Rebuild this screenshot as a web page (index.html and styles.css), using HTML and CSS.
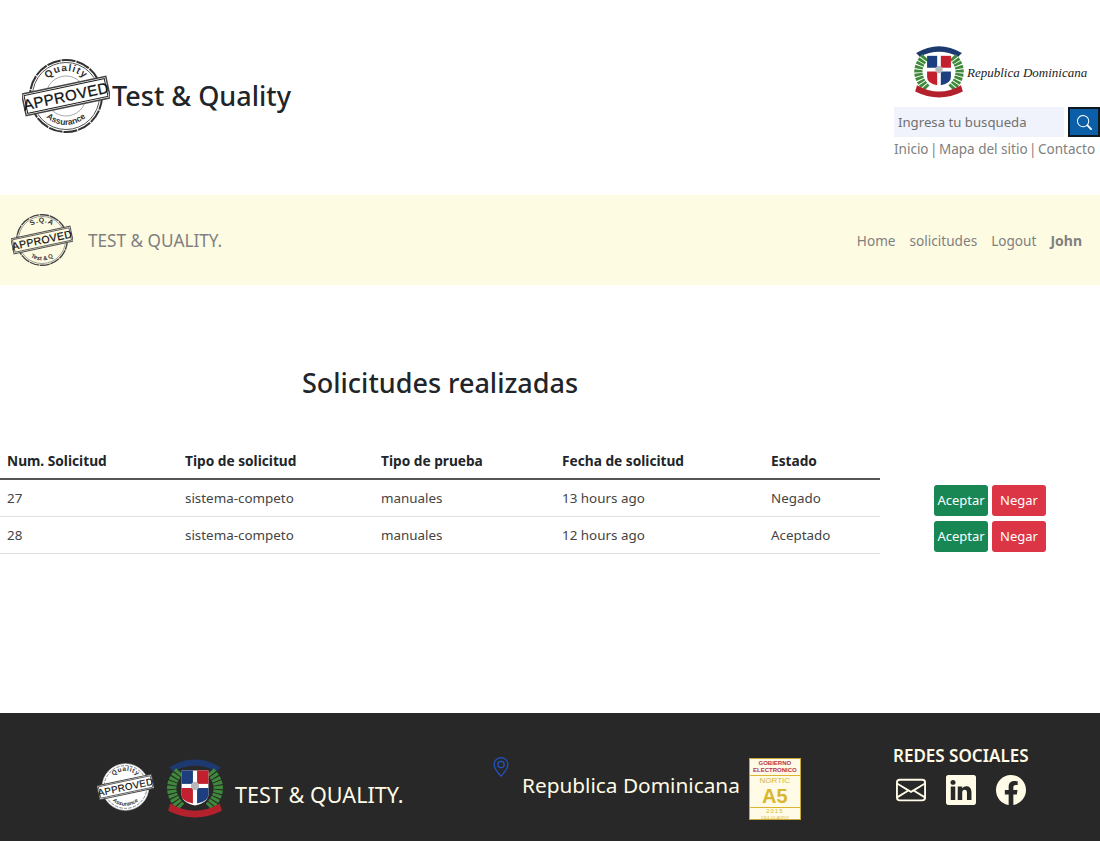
FILE: index.html
```html
<!DOCTYPE html>
<html lang="es">

<head>
    <meta charset="UTF-8">
    <meta name="viewport" content="width=device-width, initial-scale=1.0">
    <title>Test &amp; Quality</title>
    <link rel="stylesheet" href="styles.css">
</head>

<body>
    <!-- shared drawings -->
    <svg class="defs" width="0" height="0">
        <defs>
            <path id="arcTop" d="M19 37 A25 25 0 0 1 69 37" />
            <path id="arcBottom" d="M15 37 A29 29 0 0 0 73 37" />
            <symbol id="arms" viewBox="0 0 60 60">
                <path d="M5 11 Q30 -4 55 11 L51 15 Q30 4 9 15 Z" fill="#1d3a70" />
                <path class="laurel" d="M15 15 Q-1 32 17 50" />
                <path class="laurel" d="M45 15 Q61 32 43 50" />
                <path d="M17 14 H43 V37 Q43 45 30 48 Q17 45 17 37 Z" fill="#fff" />
                <rect x="17" y="14" width="11" height="13" fill="#1d3f80" />
                <rect x="32" y="14" width="11" height="13" fill="#c3202f" />
                <path d="M17 31 H28 V46 Q17 44 17 37 Z" fill="#c3202f" />
                <path d="M32 31 H43 V37 Q43 44 32 46 Z" fill="#1d3f80" />
                <circle cx="30" cy="29" r="4" fill="#b9b9b9" />
                <path d="M6 46 Q30 60 54 46 L56 53 Q30 66 4 53 Z" fill="#b3222c" />
            </symbol>
            <symbol id="search" viewBox="0 0 16 16">
                <path d="M11.742 10.344a6.5 6.5 0 1 0-1.397 1.398h-.001c.03.04.062.078.098.115l3.85 3.85a1 1 0 0 0 1.415-1.414l-3.85-3.85a1.007 1.007 0 0 0-.115-.1zM12 6.5a5.5 5.5 0 1 1-11 0 5.5 5.5 0 0 1 11 0z" />
            </symbol>
        </defs>
    </svg>

    <header class="top">
        <div class="top-brand">
            <svg class="stamp" viewBox="0 0 88 74">
                <circle cx="44" cy="37" r="36" fill="none" stroke="#333" stroke-width="2" stroke-dasharray="14 1" />
                <circle cx="44" cy="37" r="33.5" fill="none" stroke="#555" stroke-width="1" />
                <circle cx="44" cy="37" r="20" fill="none" stroke="#aaa" stroke-width="1" />
                <text class="stamp-arc"><textPath href="#arcTop" startOffset="50%">Quality</textPath></text>
                <g transform="rotate(-12 44 37)">
                    <rect x="1" y="26" width="86" height="22" fill="#fff" stroke="#444" stroke-width="1.5" />
                    <rect x="3" y="28" width="82" height="18" fill="none" stroke="#222" stroke-width="1" />
                    <text class="stamp-word" x="44" y="42.5">APPROVED</text>
                </g>
                <text class="stamp-low"><textPath href="#arcBottom" startOffset="50%">Assurance</textPath></text>
            </svg>
            <h1 class="top-title">Test &amp; Quality</h1>
        </div>
        <div class="top-side">
            <div class="gov">
                <svg class="gov-arms"><use href="#arms" /></svg>
                <span class="gov-name">Republica Dominicana</span>
            </div>
            <form class="search">
                <input class="search-input" type="text" placeholder="Ingresa tu busqueda">
                <button class="search-btn" type="button"><svg class="search-icon"><use href="#search" /></svg></button>
            </form>
            <div class="top-links">
                <span>Inicio</span>
                <span>|</span>
                <span>Mapa del sitio</span>
                <span>|</span>
                <span>Contacto</span>
            </div>
        </div>
    </header>

    <nav class="navbar">
        <div class="nav-brand">
            <svg class="nav-stamp" viewBox="0 0 88 74">
                <circle cx="44" cy="37" r="36" fill="none" stroke="#444" stroke-width="2" stroke-dasharray="14 1" />
                <circle cx="44" cy="37" r="33.5" fill="none" stroke="#777" stroke-width="1" />
                <text class="stamp-arc"><textPath href="#arcTop" startOffset="50%">S.Q.A</textPath></text>
                <g transform="rotate(-12 44 37)">
                    <rect x="1" y="26" width="86" height="22" fill="#fefbe3" stroke="#555" stroke-width="1.5" />
                    <rect x="3" y="28" width="82" height="18" fill="none" stroke="#333" stroke-width="1" />
                    <text class="stamp-word" x="44" y="42.5">APPROVED</text>
                </g>
                <text class="stamp-low"><textPath href="#arcBottom" startOffset="50%">Test &amp; Q</textPath></text>
            </svg>
            <span class="nav-name">TEST &amp; QUALITY.</span>
        </div>
        <ul class="nav-links">
            <li>Home</li>
            <li>solicitudes</li>
            <li>Logout</li>
            <li class="nav-user">John</li>
        </ul>
    </nav>

    <main class="content">
        <div class="requests">
            <h2 class="requests-title">Solicitudes realizadas</h2>
            <table class="requests-table">
                <thead>
                    <tr>
                        <th class="col-num">Num. Solicitud</th>
                        <th class="col-type">Tipo de solicitud</th>
                        <th class="col-test">Tipo de prueba</th>
                        <th class="col-date">Fecha de solicitud</th>
                        <th>Estado</th>
                    </tr>
                </thead>
                <tbody>
                    <tr>
                        <td>27</td>
                        <td>sistema-competo</td>
                        <td>manuales</td>
                        <td>13 hours ago</td>
                        <td>Negado</td>
                    </tr>
                    <tr>
                        <td>28</td>
                        <td>sistema-competo</td>
                        <td>manuales</td>
                        <td>12 hours ago</td>
                        <td>Aceptado</td>
                    </tr>
                </tbody>
            </table>
        </div>
        <div class="actions">
            <div class="action-row">
                <button class="btn btn-ok" type="button">Aceptar</button>
                <button class="btn btn-no" type="button">Negar</button>
            </div>
            <div class="action-row">
                <button class="btn btn-ok" type="button">Aceptar</button>
                <button class="btn btn-no" type="button">Negar</button>
            </div>
        </div>
    </main>

    <footer class="footer">
        <div class="foot-brand">
            <svg class="foot-stamp" viewBox="0 0 88 74">
                <circle cx="44" cy="37" r="36" fill="#fff" stroke="#ddd" stroke-width="1" />
                <circle cx="44" cy="37" r="33" fill="none" stroke="#444" stroke-width="1" stroke-dasharray="5 2" />
                <text class="stamp-arc"><textPath href="#arcTop" startOffset="50%">Quality</textPath></text>
                <g transform="rotate(-12 44 37)">
                    <rect x="1" y="26" width="86" height="22" fill="#fff" stroke="#444" stroke-width="1.5" />
                    <rect x="3" y="28" width="82" height="18" fill="none" stroke="#222" stroke-width="1" />
                    <text class="stamp-word" x="44" y="42.5">APPROVED</text>
                </g>
                <text class="stamp-low"><textPath href="#arcBottom" startOffset="50%">Assurance</textPath></text>
            </svg>
            <svg class="foot-arms"><use href="#arms" /></svg>
            <span class="foot-name">TEST &amp; QUALITY.</span>
        </div>
        <div class="foot-place">
            <svg class="pin" viewBox="0 0 16 16">
                <path d="M12.166 8.94c-.524 1.062-1.234 2.12-1.96 3.07A31.493 31.493 0 0 1 8 14.58a31.481 31.481 0 0 1-2.206-2.57c-.726-.95-1.436-2.008-1.96-3.07C3.304 7.867 3 6.862 3 6a5 5 0 0 1 10 0c0 .862-.305 1.867-.834 2.94zM8 16s6-5.686 6-10A6 6 0 0 0 2 6c0 4.314 6 10 6 10z" />
                <path d="M8 8a2 2 0 1 1 0-4 2 2 0 0 1 0 4zm0 1a3 3 0 1 0 0-6 3 3 0 0 0 0 6z" />
            </svg>
            <span class="place-name">Republica Dominicana</span>
            <div class="nortic">
                <div class="nortic-gov">GOBIERNO<br>ELECTRONICO</div>
                <div class="nortic-label">NORTIC</div>
                <div class="nortic-grade">A5</div>
                <div class="nortic-year">2015</div>
                <div class="nortic-code">1301-01-A5P07</div>
            </div>
        </div>
        <div class="foot-social">
            <div class="social-title">REDES SOCIALES</div>
            <div class="social-icons">
                <svg class="social-icon" viewBox="0 0 16 16">
                    <path d="M0 4a2 2 0 0 1 2-2h12a2 2 0 0 1 2 2v8a2 2 0 0 1-2 2H2a2 2 0 0 1-2-2V4Zm2-1a1 1 0 0 0-1 1v.217l7 4.2 7-4.2V4a1 1 0 0 0-1-1H2Zm13 2.383-4.708 2.825L15 11.105V5.383Zm-.034 6.876-5.64-3.471L8 9.583l-1.326-.795-5.64 3.47A1 1 0 0 0 2 13h12a1 1 0 0 0 .966-.741ZM1 11.105l4.708-2.897L1 5.383v5.722Z" />
                </svg>
                <svg class="social-icon" viewBox="0 0 16 16">
                    <path d="M0 1.146C0 .513.526 0 1.175 0h13.65C15.474 0 16 .513 16 1.146v13.708c0 .633-.526 1.146-1.175 1.146H1.175C.526 16 0 15.487 0 14.854V1.146zm4.943 12.248V6.169H2.542v7.225h2.401zm-1.2-8.212c.837 0 1.358-.554 1.358-1.248-.015-.709-.52-1.248-1.342-1.248-.822 0-1.359.54-1.359 1.248 0 .694.521 1.248 1.327 1.248h.016zm4.908 8.212V9.359c0-.216.016-.432.08-.586.173-.431.568-.878 1.232-.878.869 0 1.216.662 1.216 1.634v3.865h2.401V9.25c0-2.22-1.184-3.252-2.764-3.252-1.274 0-1.845.7-2.165 1.193v.025h-.016a5.54 5.54 0 0 1 .016-.025V6.169h-2.4c.03.678 0 7.225 0 7.225h2.4z" />
                </svg>
                <svg class="social-icon" viewBox="0 0 16 16">
                    <path d="M16 8.049c0-4.446-3.582-8.05-8-8.05C3.58 0-.002 3.603-.002 8.05c0 4.017 2.926 7.347 6.75 7.951v-5.625h-2.03V8.05H6.75V6.275c0-2.017 1.195-3.131 3.022-3.131.876 0 1.791.157 1.791.157v1.98h-1.009c-.993 0-1.303.621-1.303 1.258v1.51h2.218l-.354 2.326H9.25V16c3.824-.604 6.75-3.934 6.75-7.951z" />
                </svg>
            </div>
        </div>
    </footer>
</body>

</html>
```

FILE: styles.css
```css
:root {
    --text-dark: #212529;
    --text-muted: #808080;
    --nav-background: #fefbe3;
    --footer-background: #282828;
    --footer-text: #fffbe6;
    --font-family: "Noto Sans", "Open Sans", Arial, sans-serif;
}

* {
    box-sizing: border-box;
}

body {
    margin: 0;
    font-family: var(--font-family);
    color: var(--text-dark);
    background-color: #ffffff;
}

.defs {
    display: block;
}

.laurel {
    fill: none;
    stroke: #3f8a3a;
    stroke-width: 9;
    stroke-dasharray: 3 1;
}

/* Top header */
.top {
    display: flex;
    justify-content: space-between;
    height: 195px;
}

.top-brand {
    display: flex;
    align-items: center;
    padding: 0 0 4px 22px;
}

.stamp {
    width: 88px;
    height: 74px;
}

.stamp-arc {
    font-family: "Liberation Sans", Arial, sans-serif;
    font-size: 10px;
    font-weight: bold;
    letter-spacing: 1px;
    text-anchor: middle;
    fill: #333333;
}

.stamp-low {
    font-family: "Liberation Sans", Arial, sans-serif;
    font-size: 8.5px;
    font-weight: bold;
    text-anchor: middle;
    fill: #333333;
}

.stamp-word {
    font-family: "Liberation Sans", Arial, sans-serif;
    font-size: 15px;
    text-anchor: middle;
    letter-spacing: 0.5px;
    fill: #111111;
    stroke: #111111;
    stroke-width: 0.3;
}

.top-title {
    margin: 0 0 0 2px;
    font-size: 27px;
    font-weight: 500;
}

.top-side {
    width: 206px;
    padding-top: 43px;
}

.gov {
    display: flex;
    align-items: center;
    padding-left: 17px;
}

.gov-arms {
    width: 56px;
    height: 55px;
}

.gov-name {
    margin-top: 5px;
    font-family: "Liberation Serif", serif;
    font-style: italic;
    font-size: 13px;
    white-space: nowrap;
    color: #222222;
}

.search {
    display: flex;
    margin-top: 9px;
}

.search-input {
    width: 170px;
    height: 30px;
    margin-right: 4px;
    padding: 0 4px;
    border: none;
    outline: none;
    background-color: #f0f3fc;
    font-family: var(--font-family);
    font-size: 13.2px;
}

.search-input::placeholder {
    color: #707070;
}

.search-btn {
    display: flex;
    align-items: center;
    justify-content: center;
    width: 32px;
    height: 30px;
    padding: 0;
    border: 2px solid #101820;
    background-color: #0b5ea8;
}

.search-icon {
    width: 15px;
    height: 15px;
    fill: #ffffff;
}

.top-links {
    display: flex;
    gap: 1.5px;
    margin-top: 1px;
    font-size: 13.5px;
    line-height: 22px;
    white-space: nowrap;
    color: var(--text-muted);
}

/* Navbar */
.navbar {
    display: flex;
    align-items: center;
    justify-content: space-between;
    height: 90px;
    padding: 0 18px 0 11px;
    background-color: var(--nav-background);
}

.nav-brand {
    display: flex;
    align-items: center;
}

.nav-stamp {
    width: 62px;
    height: 52px;
}

.nav-name {
    margin-left: 15px;
    font-size: 17.2px;
    color: var(--text-muted);
}

.nav-links {
    display: flex;
    gap: 14px;
    margin: 0;
    padding: 0;
    list-style: none;
    font-size: 13.6px;
    color: var(--text-muted);
}

.nav-user {
    font-weight: bold;
    font-size: 14px;
}

/* Requests */
.content {
    display: flex;
    height: 428px;
}

.requests {
    width: 880px;
    padding-top: 79px;
}

.requests-title {
    margin: 0 0 47px;
    font-size: 27px;
    line-height: 38px;
    font-weight: 500;
    text-align: center;
}

.requests-table {
    width: 100%;
    border-collapse: collapse;
    font-size: 13.4px;
}

.requests-table th {
    height: 30px;
    padding: 0 7px 6px;
    font-size: 13.7px;
    text-align: left;
    border-bottom: 2px solid #555555;
}

.requests-table td {
    height: 37px;
    padding: 0 7px;
    border-bottom: 1px solid #dee2e6;
    color: #444444;
}

.col-num {
    width: 178px;
}

.col-type {
    width: 196px;
}

.col-test {
    width: 181px;
}

.col-date {
    width: 209px;
}

.actions {
    flex: 1;
    display: flex;
    flex-direction: column;
    align-items: center;
    gap: 5px;
    padding-top: 200px;
}

.action-row {
    display: flex;
    gap: 4px;
}

.btn {
    width: 54px;
    height: 31px;
    padding: 0 0 2px;
    border: none;
    border-radius: 3px;
    font-family: var(--font-family);
    font-size: 13px;
    color: #ffffff;
}

.btn-ok {
    background-color: #198754;
}

.btn-no {
    background-color: #dc3545;
}

/* Footer */
.footer {
    display: grid;
    grid-template-columns: 490px 403px 1fr;
    height: 128px;
    background-color: var(--footer-background);
    color: var(--footer-text);
}

.foot-brand {
    display: flex;
    align-items: center;
    padding: 20px 0 0 97px;
}

.foot-stamp {
    width: 57px;
    height: 48px;
}

.foot-arms {
    width: 62px;
    height: 64px;
    margin-left: 10px;
}

.foot-name {
    margin: 14px 0 0 9px;
    font-size: 21.6px;
    white-space: nowrap;
}

.foot-place {
    display: flex;
    align-items: center;
    padding-top: 20px;
}

.pin {
    width: 20px;
    height: 26px;
    margin: -40px 0 0 1px;
    fill: #1f55c4;
}

.place-name {
    margin: -4px 0 0 11px;
    font-size: 20.8px;
    white-space: nowrap;
}

.nortic {
    width: 52px;
    height: 62px;
    margin: 4px 0 0 9px;
    background-color: #fffbe6;
    border: 1px solid #c9a93a;
    text-align: center;
    font-family: "Liberation Sans", Arial, sans-serif;
    color: #d9b62e;
}

.nortic-gov {
    font-size: 6px;
    line-height: 7px;
    font-weight: bold;
    color: #b5304f;
    border-bottom: 1px solid #d9b62e;
    padding: 1px 0;
}

.nortic-label {
    font-size: 8px;
    line-height: 9px;
}

.nortic-grade {
    font-size: 20px;
    line-height: 22px;
    font-weight: bold;
    border-bottom: 1px solid #d9b62e;
}

.nortic-year {
    font-size: 6px;
    line-height: 7px;
    letter-spacing: 1px;
}

.nortic-code {
    font-size: 4px;
    line-height: 5px;
}

.foot-social {
    padding-top: 32px;
}

.social-title {
    font-size: 17px;
    line-height: 22px;
    font-weight: 600;
    white-space: nowrap;
}

.social-icons {
    display: flex;
    gap: 20px;
    margin: 8px 0 0 3px;
}

.social-icon {
    width: 30px;
    height: 30px;
    fill: var(--footer-text);
}
```
